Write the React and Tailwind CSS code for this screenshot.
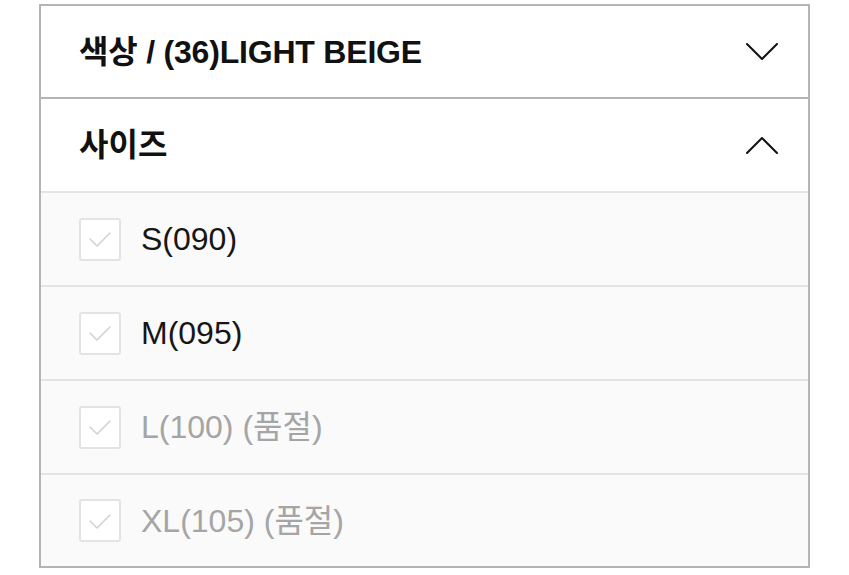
import React from 'react';

const sizes = [
    { label: 'S(090)', soldOut: false },
    { label: 'M(095)', soldOut: false },
    { label: 'L(100) (품절)', soldOut: true },
    { label: 'XL(105) (품절)', soldOut: true },
];

const Chevron = ({ up }) => (
    <svg width="32" height="18" viewBox="0 0 32 18" fill="none" className="shrink-0">
        <path
            d={up ? 'M1 17 L16 2 L31 17' : 'M1 1 L16 16 L31 1'}
            stroke="#111"
            strokeWidth="2"
            strokeLinecap="round"
            strokeLinejoin="round"
        />
    </svg>
);

const CheckBox = () => (
    <div className="w-[42px] h-[43px] shrink-0 border-2 border-[#e3e3e3] rounded-[3px] bg-white flex items-center justify-center">
        <svg width="24" height="18" viewBox="0 0 24 18" fill="none">
            <path d="M2 9 L9 16 L22 3" stroke="#d2d2d2" strokeWidth="1.6" strokeLinecap="round" strokeLinejoin="round" />
        </svg>
    </div>
);

export default function App() {
    return (
        <div className="bg-white w-[849px] h-[575px] pt-[4px] pl-[39px] font-['Liberation_Sans','Noto_Sans_CJK_KR',sans-serif]">
            <div className="w-[771px] border-2 border-[#b4b4b4] bg-white">
                {/* Colour */}
                <div className="h-[93px] flex items-center justify-between pl-[38px] pr-[30px] border-b-2 border-[#b4b4b4]">
                    <span className="text-[32px] font-bold text-[#111] tracking-[-0.2px]">색상 / (36)LIGHT BEIGE</span>
                    <Chevron />
                </div>

                {/* Size */}
                <div className="h-[94px] flex items-center justify-between pl-[38px] pr-[30px] border-b-2 border-[#e4e4e4]">
                    <span className="text-[32px] font-bold text-[#111]">사이즈</span>
                    <Chevron up />
                </div>

                <div className="bg-[#fafafa]">
                    {sizes.map((s, i) => (
                        <div
                            key={s.label}
                            className={`flex items-center gap-[20px] pl-[38px] ${i < sizes.length - 1 ? 'h-[94px] border-b-2 border-[#e4e4e4]' : 'h-[91px]'}`}
                        >
                            <CheckBox />
                            <span className={`text-[32px] ${s.soldOut ? 'text-[#a5a5a5]' : 'text-[#161616]'}`}>
                                {s.label}
                            </span>
                        </div>
                    ))}
                </div>
            </div>
        </div>
    );
}
